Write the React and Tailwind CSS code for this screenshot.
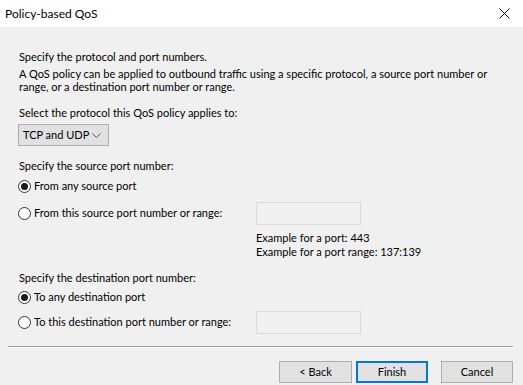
import React from "react";

function Radio({ checked, label }) {
	return (
		<div className="flex items-center h-[15px]">
			<span className="w-[13px] h-[13px] rounded-full border border-[#333333] bg-white flex items-center justify-center shrink-0">
				{checked && <span className="w-[7px] h-[7px] rounded-full bg-[#1a1a1a]" />}
			</span>
			<span className="ml-[3px] whitespace-nowrap">{label}</span>
		</div>
	);
}

function PortField() {
	return <div className="w-[105px] h-[23px] border border-[#d9d9d9] bg-[#f0f0f0]" />;
}

function Button({ children, primary, className }) {
	return (
		<button
			className={
				"h-[22px] w-[72px] bg-[#e1e1e1] flex items-center justify-center text-[11px] text-black " +
				(primary ? "border-2 border-[#0078d7]" : "border border-[#adadad]") +
				" " +
				(className || "")
			}
		>
			{children}
		</button>
	);
}

export default function App() {
	return (
		<div
			className="w-[523px] h-[385px] bg-[#f0f0f0] flex flex-col text-[11px] text-black overflow-hidden"
			style={{ fontFamily: '"Segoe UI", Lato, sans-serif' }}
		>
			<div className="h-[27px] bg-white flex items-center justify-between pl-[5px] pr-[13px] shrink-0">
				<span className="leading-[15px] text-[12px]">Policy-based QoS</span>
				<svg width="11" height="11" viewBox="0 0 11 11">
					<path d="M0.5 0.5 L10.5 10.5 M10.5 0.5 L0.5 10.5" stroke="#000" strokeWidth="1" />
				</svg>
			</div>

			<div className="pl-[19px] flex flex-col">
				<p className="mt-[22px] leading-[15px]">Specify the protocol and port numbers.</p>
				<p className="mt-[3px] leading-[13px] w-[470px]">
					A QoS policy can be applied to outbound traffic using a specific protocol, a source port number or
					range, or a destination port number or range.
				</p>
				<p className="mt-[12px] leading-[15px]">Select the protocol this QoS policy applies to:</p>
				<div className="mt-[4px] -ml-[1px] w-[91px] h-[22px] bg-[#e1e1e1] border border-[#adadad] flex items-center justify-between pl-[4px] pr-[7px]">
					<span className="whitespace-nowrap">TCP and UDP</span>
					<svg width="9" height="5" viewBox="0 0 9 5">
						<path d="M0.5 0.5 L4.5 4.5 L8.5 0.5" fill="none" stroke="#555" strokeWidth="1" />
					</svg>
				</div>

				<p className="mt-[12px] leading-[15px]">Specify the source port number:</p>
				<div className="mt-[6px] -ml-[1px]">
					<Radio checked label="From any source port" />
				</div>
				<div className="mt-[8px] -ml-[1px] flex items-center">
					<div className="w-[238px]">
						<Radio label="From this source port number or range:" />
					</div>
					<PortField />
				</div>
				<div className="mt-[6px] ml-[237px] leading-[14px]">
					<p>Example for a port: 443</p>
					<p>Example for a port range: 137:139</p>
				</div>

				<p className="mt-[11px] leading-[15px]">Specify the destination port number:</p>
				<div className="mt-[5px] -ml-[1px]">
					<Radio checked label="To any destination port" />
				</div>
				<div className="mt-[6px] -ml-[1px] flex items-center">
					<div className="w-[238px]">
						<Radio label="To this destination port number or range:" />
					</div>
					<PortField />
				</div>
			</div>

			<div className="mt-[12px] ml-[8px] mr-[10px] border-t border-[#a0a0a0] border-b border-b-white" />

			<div className="mt-[13px] flex justify-end pr-[10px]">
				<Button className="w-[73px]">&lt; Back</Button>
				<Button primary className="ml-[4px]">Finish</Button>
				<Button className="ml-[13px]">Cancel</Button>
			</div>
		</div>
	);
}
